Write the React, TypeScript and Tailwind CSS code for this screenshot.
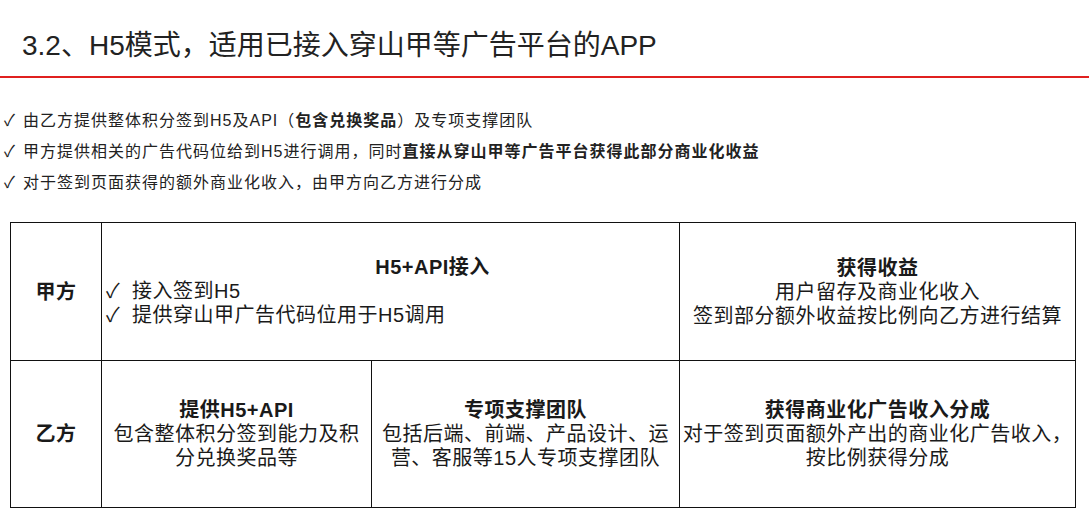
export default function App() {
  const font = { fontFamily: '"Liberation Sans", "Noto Sans CJK SC", sans-serif' };
  return (
    <div className="w-[1089px] h-[527px] bg-white text-[#1a1a1a] overflow-hidden" style={font}>
      <div className="h-[76px] pl-[22px] pt-[26px] text-[28px] leading-[40px] text-[#222]">3.2、H5模式，适用已接入穿山甲等广告平台的APP</div>
      <div className="h-[2px] bg-[#e0201f]" />
      <div className="pt-[32px] pl-[4px] flex flex-col gap-[9px] text-[16px] leading-[22px] tracking-[1px] text-[#222]">
        <div className="flex"><span className="w-[19px]">✓</span><span>由乙方提供整体积分签到H5及API（<b>包含兑换奖品</b>）及专项支撑团队</span></div>
        <div className="flex"><span className="w-[19px]">✓</span><span>甲方提供相关的广告代码位给到H5进行调用，同时<b>直接从穿山甲等广告平台获得此部分商业化收益</b></span></div>
        <div className="flex"><span className="w-[19px]">✓</span><span>对于签到页面获得的额外商业化收入，由甲方向乙方进行分成</span></div>
      </div>
      <div className="ml-[10px] mt-[28px] w-[1066px] border-[1.5px] border-[#111] text-[20px] leading-[24px] tracking-[0.5px]">
        <div className="flex h-[138px] border-b-[1.5px] border-[#111]">
          <div className="w-[91px] border-r-[1.5px] border-[#111] flex items-center justify-center font-bold">甲方</div>
          <div className="w-[578px] border-r-[1.5px] border-[#111] pt-[32px] pl-[4px]">
            <div className="font-bold text-center pl-[80px]">H5+API接入</div>
            <div className="flex"><span className="w-[26px]">✓</span>接入签到H5</div>
            <div className="flex"><span className="w-[26px]">✓</span>提供穿山甲广告代码位用于H5调用</div>
          </div>
          <div className="flex-1 flex flex-col items-center justify-center">
            <div className="font-bold">获得收益</div>
            <div>用户留存及商业化收入</div>
            <div>签到部分额外收益按比例向乙方进行结算</div>
          </div>
        </div>
        <div className="flex h-[146px]">
          <div className="w-[91px] border-r-[1.5px] border-[#111] flex items-center justify-center font-bold">乙方</div>
          <div className="w-[270px] border-r-[1.5px] border-[#111] flex flex-col items-center justify-center text-center">
            <div className="font-bold">提供H5+API</div>
            <div>包含整体积分签到能力及积<br />分兑换奖品等</div>
          </div>
          <div className="w-[308px] border-r-[1.5px] border-[#111] flex flex-col items-center justify-center text-center">
            <div className="font-bold">专项支撑团队</div>
            <div>包括后端、前端、产品设计、运<br />营、客服等15人专项支撑团队</div>
          </div>
          <div className="flex-1 flex flex-col items-center justify-center text-center">
            <div className="font-bold">获得商业化广告收入分成</div>
            <div className="whitespace-nowrap">对于签到页面额外产出的商业化广告收入，<br />按比例获得分成</div>
          </div>
        </div>
      </div>
    </div>
  );
}
